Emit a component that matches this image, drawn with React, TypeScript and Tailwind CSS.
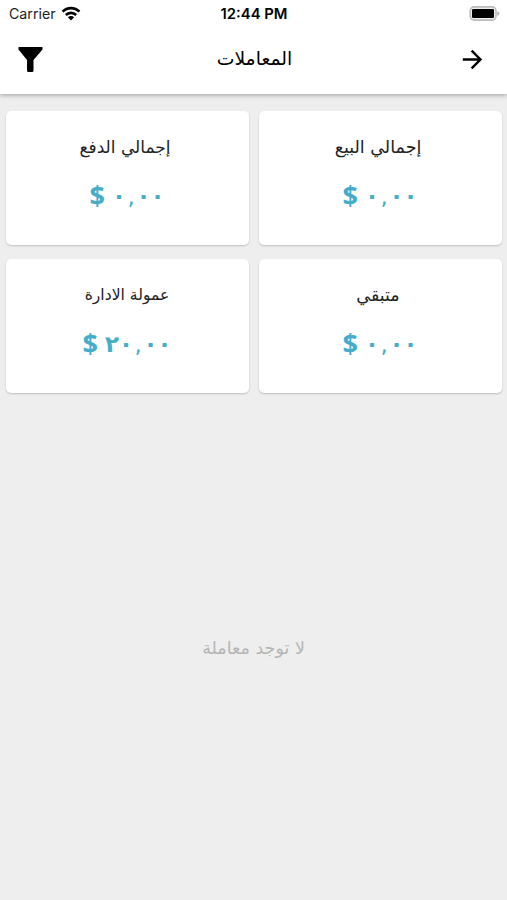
import React from 'react';
import { MdArrowForward } from 'react-icons/md';

interface SummaryCardProps {
  title: string;
  whole: string;
  fraction: string;
  titleClass: string;
}

const SummaryCard: React.FC<SummaryCardProps> = ({ title, whole, fraction, titleClass }) => (
  <div className="h-[134px] bg-white rounded-[5px] shadow-[0_1px_2px_rgba(0,0,0,0.2)] flex flex-col items-center pt-[22px]">
    <h2 className={`h-[28px] leading-[28px] text-[#222222] ${titleClass}`}>{title}</h2>
    <p dir="ltr" className="mt-[18px] h-[32px] flex items-center gap-[7px] pr-px leading-[32px] text-[#45adca]">
      <span className="text-[27px] font-bold font-['Open_Sans',sans-serif]">$</span>
      <span className="pt-[2px] text-[23px] font-bold">
        {whole}
        <span className="mx-[1.5px] font-normal">,</span>
        {fraction}
      </span>
    </p>
  </div>
);

const summary: SummaryCardProps[] = [
  { title: 'إجمالي البيع', whole: '٠', fraction: '٠٠', titleClass: 'text-[17.5px] pr-[5px]' },
  { title: 'إجمالي الدفع', whole: '٠', fraction: '٠٠', titleClass: 'text-[17px] pr-[5px]' },
  { title: 'متبقي', whole: '٠', fraction: '٠٠', titleClass: 'text-[17.5px] pr-[5px]' },
  { title: 'عمولة الادارة', whole: '٢٠', fraction: '٠٠', titleClass: 'text-[15.6px] pr-px' },
];

const App: React.FC = () => {
  return (
    <div dir="rtl" className="h-screen flex flex-col bg-[#eeeeee] font-['DejaVu_Sans',sans-serif]">
      <header className="h-[94px] bg-white shadow-[0_1px_5px_rgba(0,0,0,0.35)]">
        {/* Status bar */}
        <div dir="ltr" className="h-[27px] grid grid-cols-3 items-center pl-[9px] pr-[7px] font-['Inter',sans-serif]">
          <div className="flex items-center gap-[5px] text-[14.2px] text-[#222222]">
            <span>Carrier</span>
            <svg viewBox="0 0 20 15" className="w-5 h-[15px]" fill="none" stroke="black" strokeWidth="2.6">
              <path d="M1.6 5.7C6.3.9 13.7.9 18.4 5.7" />
              <path d="M4.8 9C7.7 6.1 12.3 6.1 15.2 9" />
              <path d="M10 14.4 6.9 11.3C8.6 9.7 11.4 9.7 13.1 11.3Z" fill="black" stroke="none" />
            </svg>
          </div>
          <span className="pt-[2px] pr-px text-center text-[14.8px] font-semibold">12:44 PM</span>
          <svg viewBox="0 0 31 15" className="w-[31px] h-[15px] justify-self-end">
            <rect x="1.2" y="0.9" width="25.8" height="13.2" rx="4" fill="#eeeeee" stroke="#bcbcbc" strokeWidth="1.6" />
            <rect x="3" y="3" width="22" height="9" rx="1.2" fill="black" />
            <path d="M28.3 5.2C31 6.1 31 8.9 28.3 9.8Z" fill="#b0b0b0" />
          </svg>
        </div>
        {/* Title bar */}
        <div className="h-[64px] flex items-center justify-between pr-[20px] pl-[18px]">
          <MdArrowForward className="w-[29px] h-[29px]" />
          <h1 className="pl-[8px] text-[18.8px]">المعاملات</h1>
          <svg viewBox="0 0 25 25" className="w-[25px] h-[25px]">
            <path d="M1.2 0H23.8Q25 0 24.5 1.2V2.5L15.5 13V23.5Q15.5 25 14 25H10.5Q9 25 9 23.5V13L.5 2.5V1.2Q0 0 1.2 0Z" />
          </svg>
        </div>
      </header>
      {/* Totals */}
      <div className="grid grid-cols-2 gap-x-[10px] gap-y-[14px] pl-[6px] pr-[5px] pt-[17px]">
        {summary.map((item) => (
          <SummaryCard key={item.title} {...item} />
        ))}
      </div>
      <p className="mt-[242px] text-center text-[17.5px] text-[#b5b5b5]">لا توجد معاملة</p>
    </div>
  );
};

export default App;
